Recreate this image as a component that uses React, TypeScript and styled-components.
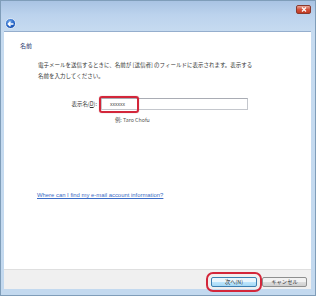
import React from "react";
import styled, { createGlobalStyle } from "styled-components";

const GlobalStyle = createGlobalStyle`
  html, body {
    margin: 0;
    padding: 0;
    width: 316px;
    height: 296px;
    overflow: hidden;
  }
`;

const Window = styled.div`
  width: 316px;
  height: 296px;
  box-sizing: border-box;

  display: flex;
  flex-direction: column;

  background: linear-gradient(#a9c3e3 0px, #bcd3ed 14px, #c6dbf0 30px, #c3d9ef 100%);
  border: 1px solid #7f9db9;
  font-family: "Noto Sans CJK JP", "Liberation Sans", sans-serif;
`;

const TitleBar = styled.div`
  height: 15px;

  display: flex;
  justify-content: flex-end;
  align-items: flex-start;

  padding: 4px 4px 0 0;
  box-sizing: border-box;
`;

const CloseButton = styled.div`
  width: 15px;
  height: 9px;

  display: flex;
  align-items: center;
  justify-content: center;

  background: linear-gradient(#e9a99a, #d3513b 50%, #c23a22);
  border: 1px solid #8a3a2e;
  border-radius: 2px;
  box-sizing: border-box;
`;

const NavBar = styled.div`
  height: 15px;

  display: flex;
  align-items: center;

  padding-left: 4px;
`;

const BackButton = styled.div`
  width: 11px;
  height: 11px;

  display: flex;
  align-items: center;
  justify-content: center;

  border-radius: 50%;
  background: radial-gradient(circle at 40% 30%, #6fa7ea, #1d5cc0 60%, #133f8e);
  border: 1px solid #d9e6f5;
  box-sizing: border-box;
`;

const Content = styled.div`
  flex: 1;

  display: flex;
  flex-direction: column;

  margin: 0 4px 0 3px;
  padding: 10px 0 0 16px;

  background: #ffffff;
  border-top: 1px solid #95aecd;
`;

const Heading = styled.div`
  font-size: 6px;
  line-height: 8px;
  color: #2b3a6e;
`;

const Description = styled.p`
  margin: 10px 0 0 18px;

  font-size: 5.5px;
  line-height: 11px;
  color: #333;
`;

const FieldRow = styled.div`
  display: flex;
  align-items: center;

  margin: 16px 0 0 18px;
`;

const FieldLabel = styled.label`
  width: 59px;
  margin-right: 4px;

  text-align: right;
  font-size: 5.5px;
  color: #333;

  u {
    text-decoration: underline;
  }
`;

const InputWrap = styled.div`
  position: relative;
  width: 147px;
  height: 12px;
`;

const TextInput = styled.div`
  width: 100%;
  height: 100%;

  display: flex;
  align-items: center;

  padding-left: 8px;
  box-sizing: border-box;

  border: 1px solid #c4c7cd;
  border-top-color: #a9acb4;
  background: #fff;

  font-family: "Liberation Sans", sans-serif;
  font-size: 5px;
  color: #444;
`;

const Highlight = styled.span`
  position: absolute;
  left: -2px;
  top: -2px;
  width: 40px;
  height: 17px;

  border: 2px solid #d3263a;
  border-radius: 3px;
  box-shadow: 0 0 1px rgba(120, 0, 0, 0.5);
  box-sizing: border-box;
`;

const Example = styled.div`
  margin: 6px 0 0 95px;

  font-size: 5.3px;
  line-height: 8px;
  color: #555;
`;

const HelpLink = styled.a`
  margin: 67px 0 0 17px;

  font-family: "Liberation Sans", sans-serif;
  font-size: 5.9px;
  line-height: 8px;
  color: #3b6cc6;
  text-decoration: underline;
`;

const Footer = styled.div`
  height: 20px;

  display: flex;
  justify-content: flex-end;
  align-items: flex-start;
  gap: 5px;

  margin: 0 4px 0 3px;
  padding: 7px 4px 0 0;
  box-sizing: border-box;

  background: #f0f0f0;
  border-top: 1px solid #dfdfdf;
`;

const Button = styled.div<{ $primary?: boolean }>`
  width: ${(p) => (p.$primary ? 46 : 45)}px;
  height: 10px;

  display: flex;
  align-items: center;
  justify-content: center;

  box-sizing: border-box;
  border: 1px solid ${(p) => (p.$primary ? "#3c7fb1" : "#8e8f8f")};
  border-radius: 2px;
  background: ${(p) =>
    p.$primary
      ? "linear-gradient(#eaf6fd 50%, #bee6fd 50%, #a7d9f5)"
      : "linear-gradient(#f2f2f2 50%, #dddddd 50%, #cfcfcf)"};

  font-size: 5.3px;
  color: #333;

  ${(p) =>
    p.$primary &&
    `
    outline: 2px solid #d3263a;
    outline-offset: 3px;
  `}
`;

const BottomFrame = styled.div`
  height: 6px;
`;

const App: React.FC = () => {
  return (
    <>
      <GlobalStyle />
      <Window>
        <TitleBar>
          <CloseButton>
            <svg width="6" height="5" viewBox="0 0 6 5">
              <path d="M1 0.5 L5 4.5 M5 0.5 L1 4.5" stroke="#fff" strokeWidth="1.2" />
            </svg>
          </CloseButton>
        </TitleBar>
        <NavBar>
          <BackButton>
            <svg width="7" height="6" viewBox="0 0 7 6">
              <path d="M6.5 3 H1.5 M3.5 0.8 L1.2 3 L3.5 5.2" stroke="#fff" strokeWidth="1.3" fill="none" />
            </svg>
          </BackButton>
        </NavBar>
        <Content>
          <Heading>名前</Heading>
          <Description>
            電子メールを送信するときに、名前が [送信者] のフィールドに表示されます。表示する
            <br />
            名前を入力してください。
          </Description>
          <FieldRow>
            <FieldLabel>
              表示名(<u>D</u>):
            </FieldLabel>
            <InputWrap>
              <TextInput>xxxxxx</TextInput>
              <Highlight />
            </InputWrap>
          </FieldRow>
          <Example>例: Taro Chofu</Example>
          <HelpLink href="#">Where can I find my e-mail account information?</HelpLink>
        </Content>
        <Footer>
          <Button $primary>次へ(N)</Button>
          <Button>キャンセル</Button>
        </Footer>
        <BottomFrame />
      </Window>
    </>
  );
};

export default App;
